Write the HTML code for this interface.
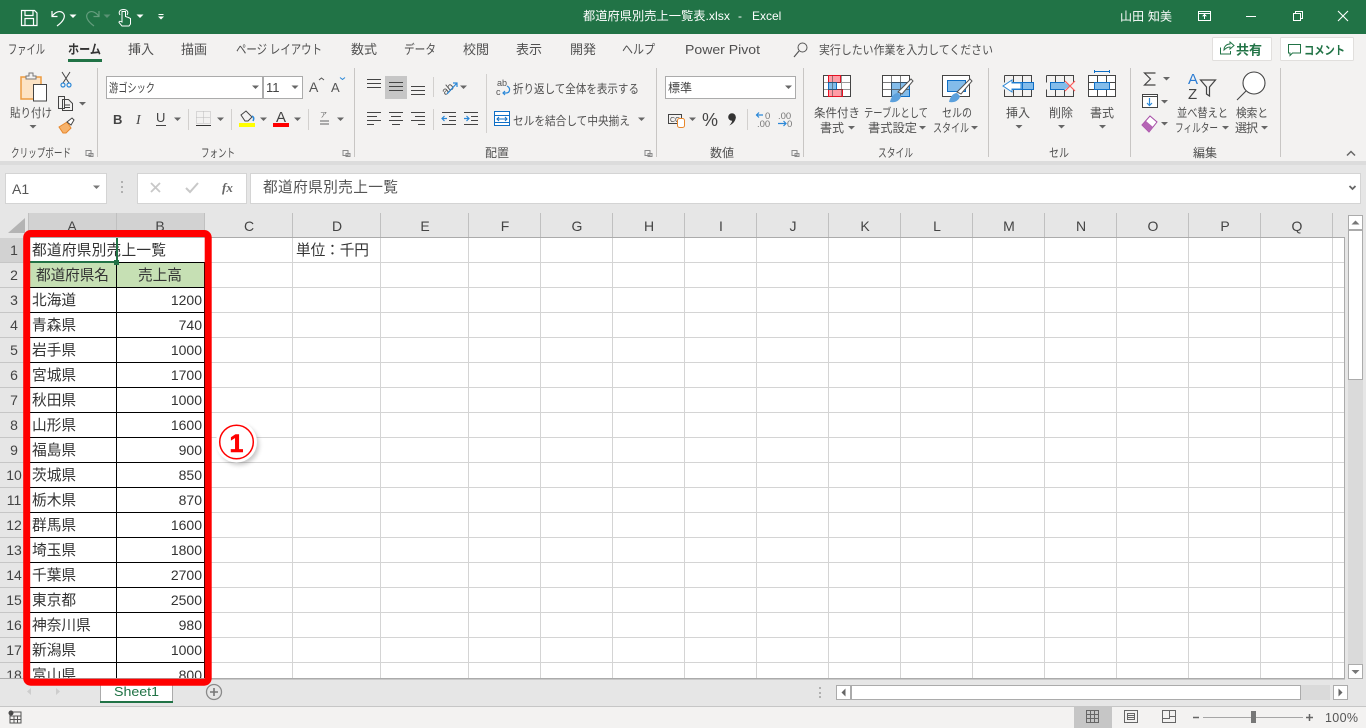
<!DOCTYPE html>
<html lang="ja"><head><meta charset="utf-8"><title>都道府県別売上一覧表.xlsx - Excel</title>
<style>
html,body{margin:0;padding:0;width:1366px;height:728px;overflow:hidden;background:#e6e6e6}
svg{display:block;position:absolute;left:0;top:0}
text{font-family:"Liberation Sans","Noto Sans CJK JP",sans-serif;font-size:12px;fill:#505050}
.tab{font-size:13px}
.cell{font-size:14.7px;fill:#333}
.num{font-size:14px;fill:#333;text-anchor:end}
.hd{font-size:14px;fill:#444;text-anchor:middle}
.crisp rect,.crisp path{shape-rendering:crispEdges}
</style></head><body>
<svg width="1366" height="728" viewBox="0 0 1366 728" xmlns="http://www.w3.org/2000/svg">
<defs>
<path id="c" d="M0 0h7l-3.5 3.5z" fill="#666"/>
<path id="l" d="M0 0.5h5v5h-5zM3 3.5h4v3h-4z" fill="none" stroke="#8a8a8a"/>
<clipPath id="gc"><rect x="28" y="238" width="1317" height="440"/></clipPath>
<clipPath id="rc"><rect x="0" y="238" width="28" height="440"/></clipPath>
<filter id="sh" x="-30%" y="-30%" width="170%" height="170%"><feGaussianBlur stdDeviation="2.5"/></filter>
</defs>

<!-- base -->
<rect width="1366" height="728" fill="#e6e6e6"/>
<rect width="1366" height="34" fill="#217346"/>
<rect y="34" width="1366" height="127" fill="#f3f2f1"/>
<rect y="161" width="1366" height="4" fill="#dcdcdc"/>

<!-- QAT -->
<g fill="none" stroke="#fff" stroke-width="1.2">
<path d="M21.5 10.5h13l2.5 2.500v12.500h-15.500z"/><path d="M25 10.500v5h8v-5M25 25.500v-7h8.500v7"/>
<path d="M52 11v5.500h5.500M52 16.500C55 12 60 10 63 13C66 16 64 21 57 26"/>
<path opacity=".3" d="M99 11v5.500h-5.500M99 16.500C96 12 91 10 88 13C85 16 87 21 94 26"/>
<path stroke-width="1" d="M122 22c-2-1-3-1-3 0.500l3 3.500h7l1.500-2v-5.500l-2-1-3-1v-5h-3.500zM120 15c-2-3 0-5.500 3.500-5.500s5.500 2.500 3.500 5.500"/>
</g>
<path d="M69.500 14.500h7l-3.500 3.500z" fill="#fff"/>
<path d="M103.500 14.500h7l-3.500 3.500z" fill="#5a9274"/>
<path d="M136.500 14.500h7l-3.500 3.500z" fill="#fff"/>
<path d="M158.500 14h5v1h-5zM158 16.500h6l-3 3z" fill="#fff"/>

<!-- title -->
<text style="fill:#fff"><tspan x="583" y="20" textLength="147" lengthAdjust="spacingAndGlyphs">都道府県別売上一覧表.xlsx</tspan><tspan x="738" y="20">-</tspan><tspan x="752" y="20">Excel</tspan></text>
<text x="1120" y="20.500" textLength="52" style="fill:#fff">山田 知美</text>
<g fill="none" stroke="#fff" stroke-width="1" class="crisp">
<rect x="1198.500" y="11.500" width="12" height="9"/><path d="M1198.500 13.500h12M1204.500 19v-4M1202.500 16.500l2-2 2 2"/>
<path d="M1246 16.500h10"/>
<path d="M1293.500 13.500h7v7h-7zM1295.500 13.500v-2h7v7h-2"/>
</g>
<path d="M1338 11l10 10M1348 11l-10 10" fill="none" stroke="#fff" stroke-width="1.100"/>

<!-- tabs -->
<text class="tab" x="8" y="54" textLength="37" lengthAdjust="spacingAndGlyphs">ファイル</text>
<text class="tab" x="68" y="54" textLength="33" lengthAdjust="spacingAndGlyphs" style="font-weight:700;fill:#333">ホーム</text>
<rect x="68" y="59" width="34" height="3" fill="#217346"/>
<text class="tab" x="128" y="54">挿入</text>
<text class="tab" x="181" y="54">描画</text>
<text class="tab" x="236" y="54" textLength="86" lengthAdjust="spacingAndGlyphs">ページ レイアウト</text>
<text class="tab" x="351" y="54">数式</text>
<text class="tab" x="404" y="54" textLength="32" lengthAdjust="spacingAndGlyphs">データ</text>
<text class="tab" x="463" y="54">校閲</text>
<text class="tab" x="516" y="54">表示</text>
<text class="tab" x="570" y="54">開発</text>
<text class="tab" x="622" y="54" textLength="33" lengthAdjust="spacingAndGlyphs">ヘルプ</text>
<text class="tab" x="685" y="54" textLength="75" lengthAdjust="spacingAndGlyphs">Power Pivot</text>
<circle cx="802.500" cy="47.500" r="4.500" fill="none" stroke="#555" stroke-width="1"/><path d="M799 51l-5 6" stroke="#555" stroke-width="1.200"/>
<text x="819" y="54" textLength="174" lengthAdjust="spacingAndGlyphs">実行したい作業を入力してください</text>

<!-- share / comment -->
<rect x="1212.500" y="37.500" width="59" height="23" rx="1" fill="#fff" stroke="#e1dfdd"/>
<rect x="1280.500" y="37.500" width="73" height="23" rx="1" fill="#fff" stroke="#e1dfdd"/>
<path d="M1220.500 47.500v6.500h10v-3M1224 50c0-4 3-6 6-6v-2l4 3.500-4 3.500v-2c-2 0-4 1-6 3z" fill="none" stroke="#217346"/>
<text x="1236" y="54.500" textLength="26" style="font-weight:700;fill:#217346;font-size:13px">共有</text>
<path d="M1288.500 44.500h12v8.500h-8l-2.500 2.500v-2.500h-1.500z" fill="none" stroke="#217346"/>
<text x="1304" y="54.500" textLength="41" lengthAdjust="spacingAndGlyphs" style="font-weight:700;fill:#217346">コメント</text>

<!-- separators -->
<path d="M97.500 68v89M354.500 68v89M656.500 68v89M803.500 68v89M988.500 68v89M1130.500 68v89M1280.500 68v89" stroke="#c8c6c4" fill="none"/>
<path d="M188.500 109v21M231.500 109v21M308.500 109v21M433.500 77v20M433.500 109v21M486.500 74v59M747.500 109v21" stroke="#d2d0ce" fill="none"/>

<!-- clipboard -->
<rect x="21" y="77" width="20" height="22" fill="#fde3c4" stroke="#ed9b40" stroke-width="1.500"/>
<path d="M26 79v-3h3v-3h4v3h3v3z" fill="#f3f2f1" stroke="#777"/>
<rect x="33.500" y="84.500" width="13" height="16.500" fill="#fff" stroke="#444"/>
<text x="10" y="117" textLength="42" lengthAdjust="spacingAndGlyphs">貼り付け</text>
<use href="#c" x="29.500" y="125"/>
<g fill="none" stroke="#444"><path d="M62 72l7 11M70 72l-7 11"/></g>
<circle cx="63" cy="85" r="2" fill="none" stroke="#2b88d8" stroke-width="1.200"/><circle cx="69" cy="85" r="2" fill="none" stroke="#2b88d8" stroke-width="1.200"/>
<path d="M58.500 96.500h6v12h-6zM62.500 99.500h6l4 4v7h-10z" fill="#f3f2f1" stroke="#444"/><path d="M65 105h5M65 107.500h5" stroke="#444"/>
<use href="#c" x="79" y="102"/>
<path d="M59 127l8-5 4 6-5 5h-3z" fill="#f6b26b" stroke="#e8872b"/><path d="M67 122l5-4 2 2-3 5z" fill="#fff" stroke="#444"/>
<text x="11" y="157" textLength="60" lengthAdjust="spacingAndGlyphs">クリップボード</text>
<use href="#l" x="86" y="150"/>

<!-- font -->
<rect x="106.500" y="76.500" width="156" height="22" fill="#fff" stroke="#ababab"/>
<rect x="263.500" y="76.500" width="39" height="22" fill="#fff" stroke="#ababab"/>
<text x="109" y="92" textLength="46" lengthAdjust="spacingAndGlyphs" style="fill:#444">游ゴシック</text>
<use href="#c" x="252" y="85.500"/>
<text x="266" y="92" style="font-size:13px;fill:#444">11</text>
<use href="#c" x="291.500" y="85.500"/>
<text x="309" y="92" style="font-size:14px;fill:#555">A</text><path d="M319 80l2.500-2 2.500 2" fill="none" stroke="#555"/>
<text x="331" y="92" style="font-size:13px;fill:#555">A</text><path d="M340 77.500l2.500 2 2.500-2" fill="none" stroke="#2b88d8"/>
<text x="113" y="124" style="font-size:13px;font-weight:700;fill:#444">B</text>
<text x="136" y="124" style="font-family:'Liberation Serif',serif;font-size:14px;font-style:italic;fill:#444">I</text>
<text x="156" y="122" style="font-size:13px;fill:#444">U</text><path d="M156 125.500h10" stroke="#444"/>
<use href="#c" x="174" y="117.500"/>
<path d="M196.500 111.500h14v12h-14zM203.500 111.500v12M196.500 117.500h14" fill="none" stroke="#bbb" stroke-dasharray="1 1"/><path d="M196 125.500h15" stroke="#333"/>
<use href="#c" x="217" y="117.500"/>
<path d="M241 115l5-4 6 6-4 4h-3z" fill="none" stroke="#444"/><path d="M252 116c2 1 2 3 1 5" stroke="#2b88d8" stroke-width="1.500" fill="none"/>
<rect x="239" y="123" width="16" height="4" fill="#ff0"/>
<use href="#c" x="260" y="117.500"/>
<text x="276" y="122" style="font-size:15px;fill:#444">A</text>
<rect x="273" y="123" width="16" height="4" fill="#f00"/>
<use href="#c" x="294" y="117.500"/>
<text x="320" y="117" style="font-size:7px;fill:#666">ア</text><path d="M320 120h9v2h-9zM320 123h9v2h-9z" fill="#aaa"/>
<use href="#c" x="337" y="117.500"/>
<text x="201" y="157" textLength="34" lengthAdjust="spacingAndGlyphs">フォント</text>
<use href="#l" x="343" y="150"/>

<!-- alignment -->
<rect x="385" y="76" width="22" height="23" fill="#c6c6c6"/>
<path d="M367 79.500h14M367 83.500h14M367 87.500h14M389 82.500h14M389 86.500h14M389 90.500h14M411 86.500h14M411 90.500h14M411 94.500h14M367 112.500h14M367 116.500h10M367 120.500h14M367 124.500h7M389 112.500h14M391 116.500h10M389 120.500h14M392 124.500h8M411 112.500h14M415 116.500h10M411 120.500h14M418 124.500h7" stroke="#444" fill="none"/>
<text x="441" y="92" transform="rotate(-40 448 88)" style="font-size:11px;fill:#555">ab</text><path d="M447 94l10-11M453 83h4v4" fill="none" stroke="#2b88d8" stroke-width="1.200"/>
<use href="#c" x="460" y="85.500"/>
<path d="M442 112.500h14M449 116.500h7M449 120.500h7M442 124.500h14M464 112.500h14M471 116.500h7M471 120.500h7M464 124.500h14" stroke="#444"/>
<path d="M447 118.500h-5M444.500 116l-2.500 2.500 2.500 2.500M464 118.500h5M466.500 116l2.500 2.500-2.500 2.500" stroke="#2b88d8" fill="none" stroke-width="1.200"/>
<text x="497" y="86" style="font-size:9px;fill:#555">ab</text><text x="496" y="95" style="font-size:9px;fill:#555">c</text>
<path d="M507 86c4 2 3 7-1 7h-3M505 91l-2 2 2 2" stroke="#2b88d8" fill="none" stroke-width="1.200"/>
<text x="513" y="93" textLength="126" lengthAdjust="spacingAndGlyphs">折り返して全体を表示する</text>
<rect x="494.500" y="111.500" width="15" height="14" fill="#fff" stroke="#0f6fc6"/>
<path d="M494.500 115.500h15M494.500 122.500h15M497 119h10M499 117l-2 2 2 2M505 117l2 2-2 2" stroke="#0f6fc6" fill="none"/>
<text x="513" y="125" textLength="117" lengthAdjust="spacingAndGlyphs">セルを結合して中央揃え</text>
<use href="#c" x="638" y="117.500"/>
<text x="485" y="157" textLength="24">配置</text>
<use href="#l" x="645" y="150"/>

<!-- number -->
<rect x="665.500" y="76.500" width="130" height="22" fill="#fff" stroke="#ababab"/>
<text x="668" y="92" style="fill:#444">標準</text>
<use href="#c" x="785" y="85.500"/>
<rect x="668.500" y="114.500" width="13" height="9" fill="none" stroke="#444"/><text x="670" y="122" style="font-size:7px;fill:#444">CC</text>
<rect x="677.500" y="118.500" width="7" height="9" rx="2" fill="#fff" stroke="#e8872b"/>
<use href="#c" x="689" y="117.500"/>
<text x="702" y="126" style="font-size:18px;fill:#444">%</text>
<circle cx="732" cy="117" r="3.800" fill="#333"/><path d="M735.800 117c0 4-3 7-6.500 8.500 2-2 3-4 3-6z" fill="#333"/>
<text x="765" y="119" style="font-size:9.500px;fill:#777">0</text><text x="757" y="127" style="font-size:9.500px;fill:#777">.00</text>
<path d="M763 115h-7M759 112.500l-2.500 2.500 2.500 2.500" fill="none" stroke="#2b88d8" stroke-width="1.200"/>
<text x="778" y="119" style="font-size:9.500px;fill:#777">.00</text><text x="787" y="127" style="font-size:9.500px;fill:#777">0</text>
<path d="M778 123.500h8M783.500 121l2.500 2.500-2.500 2.500" fill="none" stroke="#2b88d8" stroke-width="1.200"/>
<text x="710" y="157" textLength="24">数値</text>
<use href="#l" x="792" y="150"/>

<!-- styles icons -->
<g class="crisp">
<rect x="823.500" y="75.500" width="27" height="21" fill="#fff" stroke="#444"/>
<rect x="828.500" y="75.500" width="12" height="7" fill="#ff9ca5" stroke="#e81123"/>
<rect x="828.500" y="89.500" width="14" height="7" fill="#ff9ca5" stroke="#e81123"/>
<rect x="828.500" y="82.500" width="8" height="7" fill="#83bcea" stroke="#0f6fc6"/>
<path d="M832.500 75.500v21M841.500 75.500v21M823.500 82.500h27M823.500 89.500h27" stroke="#444" fill="none" opacity=".55"/>
</g>
<text x="814" y="117" textLength="46" lengthAdjust="spacingAndGlyphs">条件付き</text>
<text x="820" y="132" textLength="24">書式</text><use href="#c" x="848" y="126"/>
<g class="crisp">
<rect x="882.500" y="75.500" width="27" height="21" fill="#fff" stroke="#444"/>
<rect x="891.500" y="82.500" width="18" height="14" fill="#83bcea" stroke="#0f6fc6"/>
<path d="M891.500 75.500v21M900.500 75.500v21M882.500 82.500h27M882.500 89.500h27" stroke="#444" fill="none" opacity=".7"/>
</g>
<path d="M898 92l13-13 2 2-11 13z" fill="#fff" stroke="#555"/><path d="M890 102c1-5 4-9 8-9l3 3c-1 5-6 7-11 6z" fill="#5ba0dc"/>
<text x="864" y="117" textLength="64" lengthAdjust="spacingAndGlyphs">テーブルとして</text>
<text x="868" y="132" textLength="49" lengthAdjust="spacingAndGlyphs">書式設定</text><use href="#c" x="919" y="126"/>
<g class="crisp">
<rect x="942.500" y="75.500" width="27" height="21" fill="#fff" stroke="#444"/>
<rect x="947.500" y="80.500" width="18" height="11" fill="#83bcea" stroke="#0f6fc6"/>
</g>
<path d="M957 92l13-13 2 2-11 13z" fill="#fff" stroke="#555"/><path d="M949 102c1-5 4-9 8-9l3 3c-1 5-6 7-11 6z" fill="#5ba0dc"/>
<text x="942" y="117" textLength="30" lengthAdjust="spacingAndGlyphs">セルの</text>
<text x="933" y="132" textLength="36" lengthAdjust="spacingAndGlyphs">スタイル</text><use href="#c" x="971" y="126"/>
<text x="878" y="157" textLength="35" lengthAdjust="spacingAndGlyphs">スタイル</text>

<!-- cells icons -->
<g class="crisp" fill="none">
<path d="M1004.500 75.500h27v7M1004.500 75.500v7M1004.500 89.500v7h27v-7M1013.500 75.500v21M1022.500 75.500v21" stroke="#444"/>
<rect x="1012.500" y="82.500" width="21" height="7" fill="#83bcea" stroke="#0f6fc6"/>
<path d="M1022.500 82.500v7" stroke="#0f6fc6"/>
<path d="M1046.500 75.500h27v7M1046.500 82.500v-7M1046.500 89.500v7h27v-7M1055.500 75.500v21M1064.500 75.500v21" stroke="#444"/>
<rect x="1050.500" y="82.500" width="14" height="7" fill="#83bcea" stroke="#0f6fc6"/>
<rect x="1088.500" y="75.500" width="27" height="21" fill="#fff" stroke="#444"/>
<path d="M1097.500 75.500v21M1106.500 75.500v21M1088.500 82.500h27M1088.500 89.500h27" stroke="#444"/>
<rect x="1094.500" y="82.500" width="15" height="7" fill="#83bcea" stroke="#0f6fc6"/>
<path d="M1094.500 71.500h15M1094.500 70v3M1109.500 70v3" stroke="#0f6fc6"/>
</g>
<path d="M1012 80l-9 6 9 6v-3h9v-6h-9z" fill="#fff" stroke="#2b88d8"/>
<path d="M1064 82l6 4-6 4z" fill="#83bcea"/><path d="M1065 81l10 10M1075 81l-10 10" stroke="#ff5a5a" stroke-width="1.200"/>
<text x="1006" y="117" textLength="24">挿入</text><use href="#c" x="1015.500" y="125"/>
<text x="1049" y="117" textLength="24">削除</text><use href="#c" x="1058" y="125"/>
<text x="1090" y="117" textLength="24">書式</text><use href="#c" x="1099" y="125"/>
<text x="1049" y="157" textLength="20" lengthAdjust="spacingAndGlyphs">セル</text>

<!-- editing -->
<path d="M1155.500 73h-11l6 6-6 6h11" fill="none" stroke="#444" stroke-width="1.200"/>
<use href="#c" x="1163" y="77"/>
<rect x="1142.500" y="94.500" width="15" height="13" fill="#fff" stroke="#444"/><path d="M1142.500 96.500h15" stroke="#444"/>
<path d="M1149.500 98v7M1147 103l2.500 2.500 2.500-2.500" fill="none" stroke="#2b88d8" stroke-width="1.200"/>
<use href="#c" x="1161" y="100"/>
<path d="M1142 125l8-9 7 6-8 10z" fill="#fff" stroke="#a64ca6"/><path d="M1142 125l4-4 7 6-4 5z" fill="#b565b5"/>
<use href="#c" x="1161" y="122"/>
<text x="1188" y="84" style="font-size:15px;fill:#2b7cd3">A</text>
<text x="1188" y="99" style="font-size:15px;fill:#444">Z</text>
<path d="M1200.500 80h15l-6 7v9l-3-2v-7z" fill="none" stroke="#444" stroke-width="1.200"/>
<circle cx="1254" cy="83" r="11" fill="#fff" stroke="#444" stroke-width="1.100"/><path d="M1246 91l-9 9" stroke="#444" stroke-width="1.100"/>
<text x="1177" y="117" textLength="51" lengthAdjust="spacingAndGlyphs">並べ替えと</text>
<text x="1175" y="132" textLength="43" lengthAdjust="spacingAndGlyphs">フィルター</text><use href="#c" x="1222" y="126"/>
<text x="1236" y="117" textLength="32" lengthAdjust="spacingAndGlyphs">検索と</text>
<text x="1235" y="132" textLength="23">選択</text><use href="#c" x="1261" y="126"/>
<text x="1193" y="157" textLength="24">編集</text>
<path d="M1347 155.500l4-4 4 4" fill="none" stroke="#666" stroke-width="1.500"/>

<!-- formula bar -->
<rect x="5.500" y="173.500" width="101" height="30" fill="#fff" stroke="#d4d4d4"/>
<text x="12" y="194" style="font-size:14px;fill:#555">A1</text>
<path d="M93 185.500h7l-3.500 3.500z" fill="#777"/>
<path d="M121 181h2v2h-2zM121 186h2v2h-2zM121 191h2v2h-2z" fill="#b0b0b0"/>
<rect x="137.500" y="173.500" width="109" height="30" fill="#fff" stroke="#d4d4d4"/>
<path d="M151 183l9 9M160 183l-9 9" stroke="#c8c8c8" stroke-width="1.800" fill="none"/>
<path d="M186 188l4 4 8-9" stroke="#c8c8c8" stroke-width="2" fill="none"/>
<text x="222" y="192" style="font-family:'Liberation Serif',serif;font-size:13px;font-style:italic;font-weight:700;fill:#666">fx</text>
<rect x="250.500" y="173.500" width="1110" height="30" fill="#fff" stroke="#d4d4d4"/>
<text x="263" y="192" textLength="135" style="font-size:14.700px;fill:#555">都道府県別売上一覧</text>
<path d="M1349.500 186l3 3 3-3" fill="none" stroke="#666" stroke-width="1.800"/>

<!-- sheet -->
<rect x="28" y="238" width="1317" height="440" fill="#fff"/>
<rect x="28" y="213" width="177" height="24" fill="#d2d2d2"/>
<rect x="0" y="238" width="28" height="24" fill="#d2d2d2"/>
<path d="M25 218v15h-17z" fill="#b4b4b4"/>
<path d="M28.500 213v24M116.500 213v24M204.500 213v24M292.500 213v24M380.500 213v24M468.500 213v24M540.500 213v24M612.500 213v24M684.500 213v24M756.500 213v24M828.500 213v24M900.500 213v24M972.500 213v24M1044.500 213v24M1116.500 213v24M1188.500 213v24M1260.500 213v24M1332.500 213v24" stroke="#c0c0c0" fill="none"/>
<path d="M0 262.500h28M0 287.500h28M0 312.500h28M0 337.500h28M0 362.500h28M0 387.500h28M0 412.500h28M0 437.500h28M0 462.500h28M0 487.500h28M0 512.500h28M0 537.500h28M0 562.500h28M0 587.500h28M0 612.500h28M0 637.500h28M0 662.500h28" stroke="#c6c6c6" fill="none"/>
<g>
<text class="hd" x="72" y="231">A</text><text class="hd" x="160" y="231">B</text><text class="hd" x="249" y="231">C</text><text class="hd" x="337" y="231">D</text><text class="hd" x="425" y="231">E</text><text class="hd" x="505" y="231">F</text><text class="hd" x="577" y="231">G</text><text class="hd" x="649" y="231">H</text><text class="hd" x="721" y="231">I</text><text class="hd" x="793" y="231">J</text><text class="hd" x="865" y="231">K</text><text class="hd" x="937" y="231">L</text><text class="hd" x="1009" y="231">M</text><text class="hd" x="1081" y="231">N</text><text class="hd" x="1153" y="231">O</text><text class="hd" x="1225" y="231">P</text><text class="hd" x="1297" y="231">Q</text>
</g>
<g clip-path="url(#rc)">
<text class="hd" x="14" y="255">1</text><text class="hd" x="14" y="280">2</text><text class="hd" x="14" y="305">3</text><text class="hd" x="14" y="330">4</text><text class="hd" x="14" y="355">5</text><text class="hd" x="14" y="380">6</text><text class="hd" x="14" y="405">7</text><text class="hd" x="14" y="430">8</text><text class="hd" x="14" y="455">9</text><text class="hd" x="14" y="480">10</text><text class="hd" x="14" y="505">11</text><text class="hd" x="14" y="530">12</text><text class="hd" x="14" y="555">13</text><text class="hd" x="14" y="580">14</text><text class="hd" x="14" y="605">15</text><text class="hd" x="14" y="630">16</text><text class="hd" x="14" y="655">17</text><text class="hd" x="14" y="680">18</text>
</g>
<g clip-path="url(#gc)">
<path d="M205 262.500H1345M205 287.500H1345M205 312.500H1345M205 337.500H1345M205 362.500H1345M205 387.500H1345M205 412.500H1345M205 437.500H1345M205 462.500H1345M205 487.500H1345M205 512.500H1345M205 537.500H1345M205 562.500H1345M205 587.500H1345M205 612.500H1345M205 637.500H1345M205 662.500H1345M292.500 238V678M380.500 238V678M468.500 238V678M540.500 238V678M612.500 238V678M684.500 238V678M756.500 238V678M828.500 238V678M900.500 238V678M972.500 238V678M1044.500 238V678M1116.500 238V678M1188.500 238V678M1260.500 238V678M1332.500 238V678" stroke="#d4d4d4" fill="none"/>
<rect x="30" y="263" width="175" height="24" fill="#c6e0b4"/>
<path d="M30 287.500H205M30 312.500H205M30 337.500H205M30 362.500H205M30 387.500H205M30 412.500H205M30 437.500H205M30 462.500H205M30 487.500H205M30 512.500H205M30 537.500H205M30 562.500H205M30 587.500H205M30 612.500H205M30 637.500H205M30 662.500H205M116.500 263V678M204.500 263V678M30 262.500H205" stroke="#000" fill="none"/>
<text class="cell" x="32" y="255" textLength="134">都道府県別売上一覧</text>
<text class="cell" x="296" y="255" textLength="73">単位：千円</text>
<text class="cell" x="36" y="280" textLength="73">都道府県名</text>
<text class="cell" x="138" y="280" textLength="44">売上高</text>
<text class="cell" x="32" y="305">北海道</text><text class="num" x="202" y="305">1200</text>
<text class="cell" x="32" y="330">青森県</text><text class="num" x="202" y="330">740</text>
<text class="cell" x="32" y="355">岩手県</text><text class="num" x="202" y="355">1000</text>
<text class="cell" x="32" y="380">宮城県</text><text class="num" x="202" y="380">1700</text>
<text class="cell" x="32" y="405">秋田県</text><text class="num" x="202" y="405">1000</text>
<text class="cell" x="32" y="430">山形県</text><text class="num" x="202" y="430">1600</text>
<text class="cell" x="32" y="455">福島県</text><text class="num" x="202" y="455">900</text>
<text class="cell" x="32" y="480">茨城県</text><text class="num" x="202" y="480">850</text>
<text class="cell" x="32" y="505">栃木県</text><text class="num" x="202" y="505">870</text>
<text class="cell" x="32" y="530">群馬県</text><text class="num" x="202" y="530">1600</text>
<text class="cell" x="32" y="555">埼玉県</text><text class="num" x="202" y="555">1800</text>
<text class="cell" x="32" y="580">千葉県</text><text class="num" x="202" y="580">2700</text>
<text class="cell" x="32" y="605">東京都</text><text class="num" x="202" y="605">2500</text>
<text class="cell" x="32" y="630">神奈川県</text><text class="num" x="202" y="630">980</text>
<text class="cell" x="32" y="655">新潟県</text><text class="num" x="202" y="655">1000</text>
<text class="cell" x="32" y="680">富山県</text><text class="num" x="202" y="680">800</text>
<path d="M29 262H117V237" fill="none" stroke="#217346" stroke-width="2"/>
<rect x="114" y="260" width="5" height="5" fill="#217346"/>
</g>
<path d="M28 237.500H1344.500V678.500H0" stroke="#ababab" fill="none"/>

<!-- v scrollbar -->
<rect x="1348" y="215" width="15" height="463" fill="#dadada"/>
<rect x="1348.500" y="215.500" width="14" height="14" fill="#fff" stroke="#ababab"/>
<path d="M1351.500 224.500l4-4 4 4z" fill="#777"/>
<rect x="1348.500" y="230.500" width="14" height="149" fill="#fff" stroke="#ababab"/>
<rect x="1348.500" y="664.500" width="14" height="14" fill="#fff" stroke="#ababab"/>
<path d="M1351.500 670h8l-4 4z" fill="#777"/>

<!-- tab bar -->
<rect x="0" y="679" width="1366" height="28" fill="#e6e6e6"/>
<path d="M30 679h70M173 679h1172" stroke="#ababab"/>
<path d="M31 688v7l-4-3.500zM56 688v7l4-3.500z" fill="#cdcdcd"/>
<path d="M100.500 679v22.500H172.500V679" fill="#fff" stroke="#ababab"/>
<rect x="100" y="701" width="73" height="2" fill="#217346"/>
<text x="114" y="696" textLength="45" lengthAdjust="spacingAndGlyphs" style="font-size:13px;fill:#217346">Sheet1</text>
<circle cx="214" cy="692" r="7.500" fill="none" stroke="#8a8a8a" stroke-width="1.300"/><path d="M210 692h8M214 688v8" stroke="#777" stroke-width="1.600"/>
<path d="M819 687h2v2h-2zM819 692h2v2h-2zM819 696h2v2h-2z" fill="#b0b0b0"/>
<rect x="836.500" y="685.500" width="14" height="14" fill="#fff" stroke="#ababab"/>
<path d="M845.500 688.500v8l-4-4z" fill="#666"/>
<rect x="851.500" y="685.500" width="449" height="14" fill="#fff" stroke="#ababab"/>
<rect x="1301" y="685" width="29" height="15" fill="#dadada"/>
<rect x="1333.500" y="685.500" width="14" height="14" fill="#fff" stroke="#ababab"/>
<path d="M1338.500 688.500v8l4-4z" fill="#666"/>

<!-- status bar -->
<rect x="0" y="706" width="1366" height="22" fill="#f3f2f1"/>
<path d="M0 706.500H1366" stroke="#c6c6c6"/>
<circle cx="11" cy="713" r="2.500" fill="#444"/><path d="M10 712h11v11h-11zM10 716h11M10 719.500h11M14 716v7M17.500 716v7" fill="none" stroke="#555"/>
<rect x="1074" y="707" width="38" height="21" fill="#c6c6c6"/>
<path d="M1086.500 710.500h12v12h-12zM1086.500 714.500h12M1086.500 718.500h12M1090.500 710.500v12M1094.500 710.500v12" fill="none" stroke="#666"/>
<path d="M1124.500 710.500h13v12h-13zM1127.500 713.500h7v6h-7zM1127.500 715.500h7M1127.500 717.500h7" fill="none" stroke="#666"/>
<path d="M1162.500 710.500h13v12h-13zM1162.500 718.500h7v-8M1169.500 716.500h6" fill="none" stroke="#666"/>
<path d="M1193 717.500h6M1306 717.500h7M1309.500 714v7" stroke="#666" stroke-width="1.500"/>
<path d="M1203 717.500h100" stroke="#a6a6a6"/>
<rect x="1251" y="711" width="5" height="12" fill="#777"/>
<text x="1325" y="722" textLength="33" style="font-size:12.500px;fill:#555">100%</text>

<!-- annotation -->
<rect x="26.700" y="233.500" width="181.500" height="448.700" rx="4" fill="none" stroke="#f00" stroke-width="7"/>
<circle cx="239" cy="445" r="20" fill="#000" opacity=".22" filter="url(#sh)"/>
<circle cx="236.500" cy="442" r="20.500" fill="#fff"/>
<circle cx="236.500" cy="442" r="16.800" fill="none" stroke="#f00" stroke-width="1.500"/>
<text x="236.500" y="452" style="font-size:25px;font-weight:700;fill:#f00;text-anchor:middle;stroke:#f00;stroke-width:.6">1</text>
</svg>
</body></html>
